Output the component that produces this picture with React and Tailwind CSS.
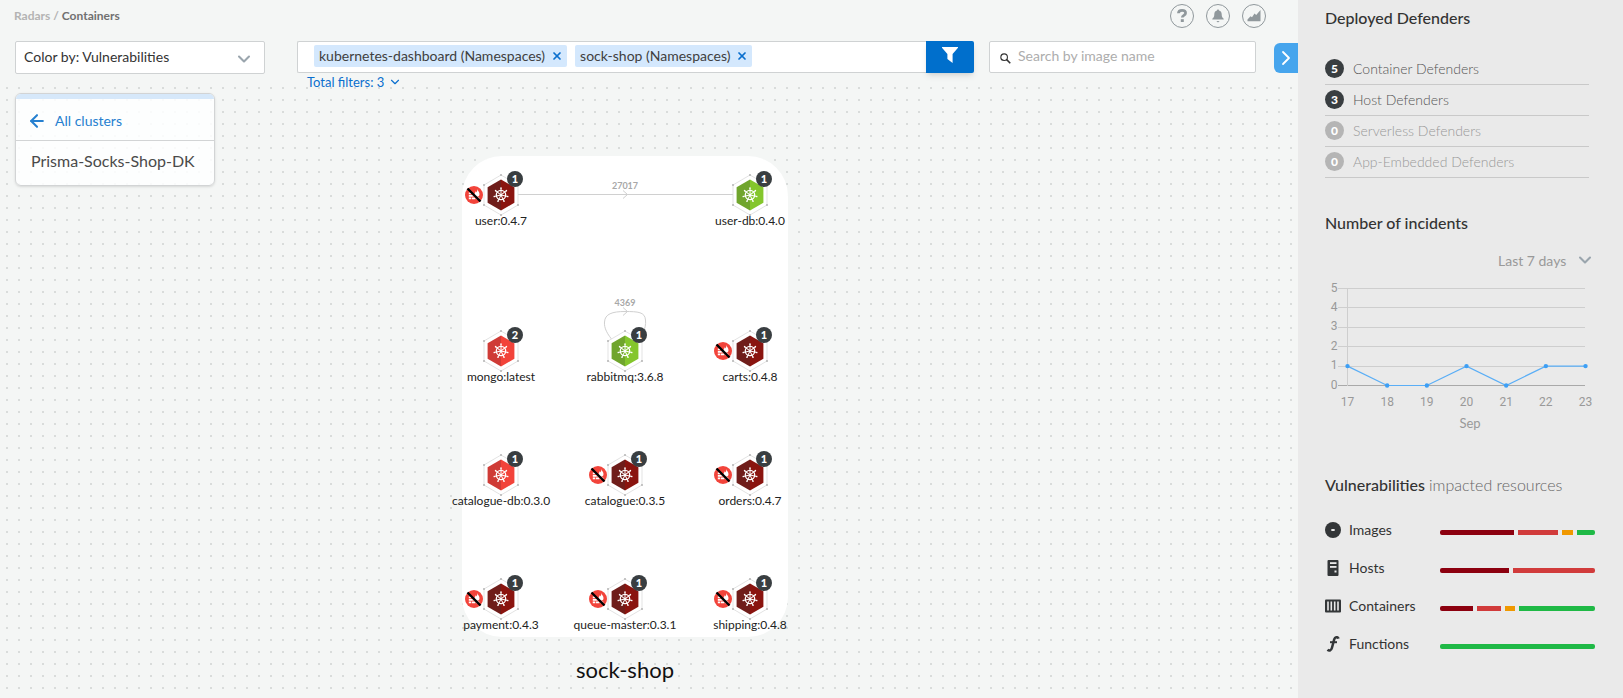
import React, { useState } from 'react';
import { ArrowLeft, ChevronDown, ChevronRight, X } from 'lucide-react';

const nodes = [
  { name: 'user:0.4.7', x: 39, y: 39, color: 'critical', count: 1, blocked: true },
  { name: 'user-db:0.4.0', x: 288, y: 39, color: 'ok', count: 1 },
  { name: 'mongo:latest', x: 39, y: 195, color: 'high', count: 2 },
  { name: 'rabbitmq:3.6.8', x: 163, y: 195, color: 'ok', count: 1 },
  { name: 'carts:0.4.8', x: 288, y: 195, color: 'critical', count: 1, blocked: true },
  { name: 'catalogue-db:0.3.0', x: 39, y: 319, color: 'high', count: 1 },
  { name: 'catalogue:0.3.5', x: 163, y: 319, color: 'critical', count: 1, blocked: true },
  { name: 'orders:0.4.7', x: 288, y: 319, color: 'critical', count: 1, blocked: true },
  { name: 'payment:0.4.3', x: 39, y: 443, color: 'critical', count: 1, blocked: true },
  { name: 'queue-master:0.3.1', x: 163, y: 443, color: 'critical', count: 1, blocked: true },
  { name: 'shipping:0.4.8', x: 288, y: 443, color: 'critical', count: 1, blocked: true },
];

const nodeColors = {
  critical: ['#6f1d1a', '#8a140f'],
  high: ['#cf3b36', '#f2433a'],
  ok: ['#70a52d', '#84c62c'],
};

const defenders = [
  { label: 'Container Defenders', count: 5 },
  { label: 'Host Defenders', count: 3 },
  { label: 'Serverless Defenders', count: 0 },
  { label: 'App-Embedded Defenders', count: 0 },
];

const incidents = [
  { day: 17, value: 1 },
  { day: 18, value: 0 },
  { day: 19, value: 0 },
  { day: 20, value: 1 },
  { day: 21, value: 0 },
  { day: 22, value: 1 },
  { day: 23, value: 1 },
];

const resources = [
  { label: 'Images', icon: ImageIcon, critical: 74, high: 40, medium: 11, ok: 18 },
  { label: 'Hosts', icon: HostIcon, critical: 69, high: 82, medium: 0, ok: 0 },
  { label: 'Containers', icon: ContainerIcon, critical: 33, high: 24, medium: 10, ok: 76 },
  { label: 'Functions', icon: FunctionIcon, critical: 0, high: 0, medium: 0, ok: 155 },
];

const severities = [
  { key: 'critical', className: 'bg-[#8c000f]' },
  { key: 'high', className: 'bg-[#d13b3b]' },
  { key: 'medium', className: 'bg-[#f09800]' },
  { key: 'ok', className: 'bg-[#1fb946]' },
];

function ImageIcon() {
  return (
    <svg viewBox="0 0 16 16" className="w-4 h-4 mt-0.5" aria-hidden="true">
      <circle cx="8" cy="8" r="8" fill="#333638" />
      <rect x="6.3" y="7" width="3.4" height="2" rx="0.6" fill="#eaeaea" />
    </svg>
  );
}

function HostIcon() {
  return (
    <svg viewBox="0 0 16 16" className="w-4 h-4 mt-0.5" aria-hidden="true">
      <rect x="2.5" y="0" width="11" height="16" rx="1" fill="#333638" />
      <rect x="5" y="2.2" width="6.5" height="1.8" fill="#eaeaea" />
      <rect x="5" y="6" width="6.5" height="1.8" fill="#eaeaea" />
      <rect x="9.5" y="10.5" width="2" height="2" fill="#eaeaea" />
    </svg>
  );
}

function ContainerIcon() {
  return (
    <svg viewBox="0 0 16 16" className="w-4 h-4 mt-0.5" aria-hidden="true">
      <rect x="0" y="1.5" width="16" height="13" rx="1" fill="#333638" />
      <path d="M3 3.500v9M6.300 3.500v9M9.700 3.500v9M13 3.500v9" stroke="#eaeaea" strokeWidth="1.600" />
    </svg>
  );
}

function FunctionIcon() {
  return (
    <svg viewBox="0 0 16 16" className="w-4 h-4 mt-0.5" aria-hidden="true">
      <path d="M13.6 2.600C12.800.6 10 .6 9.200 3.400L6.900 12c-.7 2.800-3 3.200-4.300 1.600" fill="none" stroke="#333638" strokeWidth="2.500" />
      <path d="M5 6.200h7" stroke="#333638" strokeWidth="2" />
    </svg>
  );
}

function HelpIcon() {
  return (
    <svg viewBox="0 0 16 16" className="w-4 h-4" aria-hidden="true">
      <path d="M4.4 5.3C4.5 3.2 6 2.3 8 2.3c2.1 0 3.6 1 3.6 2.7 0 2.5-3.3 2.2-3.3 4.5" fill="none" stroke="#90989c" strokeWidth="2.7" />
      <rect x="6.8" y="11.2" width="3" height="2.8" fill="#90989c" />
    </svg>
  );
}

function BellIcon() {
  return (
    <svg viewBox="0 0 16 16" className="w-4 h-4" fill="#90989c" aria-hidden="true">
      <path d="M8 1.5c.7 0 1 .4 1 .9 1.8.5 2.7 1.9 2.7 3.8 0 2.5.7 3.6 2 4.5v.8H2.300v-.8c1.300-.9 2-2 2-4.500 0-1.900.9-3.300 2.700-3.800 0-.5.3-.9 1-.9z" />
      <path d="M6.400 13h3.200L8 14.600z" />
    </svg>
  );
}

function TrendIcon() {
  return (
    <svg viewBox="0 0 16 16" className="w-4 h-4" fill="#90989c" aria-hidden="true">
      <path d="M1.500 13.300V11.500L4.500 8.200 6 9.200 8.500 5.600 10.200 7 14.500 2v11.300z" />
    </svg>
  );
}

// Small firewall with a strike through it, shown left of a node
function FirewallOff() {
  return (
    <svg viewBox="-9 -9 18 18" className="absolute -left-9 -top-[9px] w-[18px] h-[18px]" aria-hidden="true">
      <circle r="9" fill="#f2443b" />
      <path d="M-5.200-2.600h2.600v1.800h-2.600zM-5.200-.1h4v1.800h-4zM-.5-.1h2v1.800h-2zM-5.200 2.400h2.300v1.900h-2.300zM-2.200 2.400h3.600v1.900h-3.600zM2.100 2.400h3.200v1.900H2.100z" fill="#fff" />
      <path d="M3.200-6c.2 1.700 2.300 2.700 2.300 5C5.500.7 4.600 1.800 3 1.800S.4.800.5-.8C.6-2 1.500-2.600 1.700-3.800c.5.3.8.8.9 1.300.6-1 .8-2.300.6-3.500z" fill="#fff" />
      <path d="M-6.500-6.500L6.500 6.500" stroke="#000" strokeWidth="2.400" />
    </svg>
  );
}

const spokes = [0, 1, 2, 3, 4, 5, 6].map((i) => (i * 360) / 7);

function Hexagon({ color }) {
  const [left, right] = nodeColors[color];
  return (
    <svg viewBox="-20 -22 40 44" className="absolute -left-5 -top-[22px] w-10 h-11" aria-hidden="true">
      <path d="M0-20L17-10V10L0 20-17 10V-10z" fill="#fff" stroke="#dcdcdc" strokeWidth="0.8" />
      {[[0, -20], [17, -10], [17, 10], [0, 20], [-17, 10], [-17, -10]].map(([x, y]) => (
        <circle key={`${x},${y}`} cx={x} cy={y} r="1" fill="#b4b4b4" />
      ))}
      <path d="M0-15.500V15.500L-13.400 7.700V-7.700z" fill={left} />
      <path d="M0-15.500V15.500L13.400 7.700V-7.700z" fill={right} />
      <g stroke="#fff" fill="none">
        <circle r="4.700" strokeWidth="1.300" />
        {spokes.map((a) => (
          <g key={a} transform={`rotate(${a})`}>
            <path d="M0-1V-7" strokeWidth="1" />
            <circle cy="-6.900" r="0.800" fill="#fff" stroke="none" />
          </g>
        ))}
      </g>
      <circle r="1.200" fill="#fff" />
    </svg>
  );
}

function Node({ node }) {
  return (
    <div className="absolute w-0 h-0" style={{ left: node.x, top: node.y }}>
      {node.blocked && <FirewallOff />}
      <Hexagon color={node.color} />
      <span className="absolute left-1.5 -top-6 w-4 h-4 rounded-full bg-[#393e41] text-white text-[11px] leading-4 font-black text-center">
        {node.count}
      </span>
      <span className="absolute left-0 top-[18px] -translate-x-1/2 whitespace-nowrap text-[12px] leading-4 text-[#222]">
        {node.name}
      </span>
    </div>
  );
}

function Chip({ label, onRemove }) {
  return (
    <span className="flex items-center h-[22px] gap-1.5 pl-[5px] pr-1 pb-px rounded-xs bg-[#d4e8fd] text-[14px] text-[#404040] whitespace-nowrap">
      {label}
      <button type="button" aria-label={`Remove ${label}`} onClick={onRemove} className="text-[#0a6fce]">
        <X className="w-3 h-3" strokeWidth={3.5} />
      </button>
    </span>
  );
}

function IncidentChart() {
  const px = (i) => 22.5 + i * 39.67;
  const py = (v) => 109.5 - v * 19.4;
  return (
    <svg viewBox="0 0 270 160" className="block w-[270px] h-[160px]" role="img" aria-label="Incidents per day">
      {[0, 1, 2, 3, 4, 5].map((v) => (
        <g key={v}>
          <path d={`M13 ${Math.floor(py(v)) + 0.5}H260`} stroke={v === 0 ? '#a9a9a9' : '#cecece'} />
          <text x="12.500" y={py(v) + 3} textAnchor="end" fontSize="12" fontFamily="Roboto, sans-serif" fill="#999">{v}</text>
        </g>
      ))}
      <path d="M22.500 12V110" stroke="#cecece" />
      <polyline
        points={incidents.map((d, i) => `${px(i)},${py(d.value)}`).join(' ')}
        fill="none"
        stroke="#5aaef6"
        strokeWidth="1.200"
      />
      {incidents.map((d, i) => (
        <g key={d.day}>
          <circle cx={px(i)} cy={py(d.value)} r="2.200" fill="#3d9ff5" />
          <text x={px(i)} y="130" textAnchor="middle" fontSize="12" fontFamily="Roboto, sans-serif" fill="#999">{d.day}</text>
        </g>
      ))}
      <text x="145" y="152" textAnchor="middle" fontSize="13" fill="#999">Sep</text>
    </svg>
  );
}

function Sidebar() {
  return (
    <aside className="w-[325px] shrink-0 bg-[#eaeaea] pl-[27px] pr-7 pt-2 text-[#333]">
      <section className="pr-1.5">
        <h2 className="text-[16px] leading-5 font-medium">Deployed Defenders</h2>
        <ul className="mt-[26px]">
          {defenders.map((d) => (
            <li
              key={d.label}
              className={`flex items-center gap-[9px] h-[31px] pb-0.5 border-b border-[#c9c9c9] text-[14px] font-light ${d.count ? 'text-[#555]' : 'text-[#999]'}`}
            >
              <span
                className={`w-[19px] h-[19px] rounded-full text-white text-[12px] leading-[19px] font-black text-center ${d.count ? 'bg-[#393e41]' : 'bg-[#b5b5b5]'}`}
              >
                {d.count}
              </span>
              {d.label}
            </li>
          ))}
        </ul>
      </section>

      <section className="mt-[35px] pr-1.5">
        <h2 className="text-[16px] leading-5 font-medium">Number of incidents</h2>
        <div className="mt-[15px] relative ml-auto w-[91px] h-6">
          <select aria-label="Time range" className="appearance-none w-full h-6 bg-transparent text-[14px] text-[#999] outline-none">
            <option>Last 7 days</option>
            <option>Last 30 days</option>
          </select>
          <ChevronDown className="absolute -right-1.5 top-0.5 w-5 h-5 text-[#9aa5ad] pointer-events-none" strokeWidth={2.5} />
        </div>
        <div className="mt-1">
          <IncidentChart />
        </div>
      </section>

      <section className="mt-[39px]">
        <h2 className="text-[16px] leading-5 font-medium">
          Vulnerabilities <span className="font-light text-[#666]">impacted resources</span>
        </h2>
        <ul className="mt-[15px]">
          {resources.map((r) => (
            <li key={r.label} className="flex items-center gap-2 h-[38px] text-[14px]">
              <r.icon />
              <span className="w-[83px]">{r.label}</span>
              <div className="flex flex-1 gap-1 h-[5px] mt-1.5 rounded-xs overflow-hidden">
                {severities
                  .filter((s) => r[s.key] > 0)
                  .map((s) => (
                    <div key={s.key} className={s.className} style={{ flex: `${r[s.key]} 1 0` }} />
                  ))}
              </div>
            </li>
          ))}
        </ul>
      </section>
    </aside>
  );
}

export default function App() {
  const [filters, setFilters] = useState([
    'kubernetes-dashboard (Namespaces)',
    'sock-shop (Namespaces)',
  ]);

  return (
    <div className="min-h-screen flex bg-[#f4f6f5] font-[Lato,sans-serif]">
      <main className="flex-1 min-w-0 flex flex-col">
        <header className="flex items-center justify-between h-8 pl-3.5 pr-8">
          <nav aria-label="Breadcrumb" className="text-[12px] font-bold text-[#b3b3b3]">
            <a href="#radars">Radars</a> / <span className="text-[#707070]">Containers</span>
          </nav>
          <div className="flex gap-3">
            <button type="button" aria-label="Help" className="w-6 h-6 rounded-full border border-[#90989c] flex items-center justify-center">
              <HelpIcon />
            </button>
            <button type="button" aria-label="Notifications" className="w-6 h-6 rounded-full border border-[#90989c] flex items-center justify-center">
              <BellIcon />
            </button>
            <button type="button" aria-label="Statistics" className="w-6 h-6 rounded-full border border-[#90989c] flex items-center justify-center">
              <TrendIcon />
            </button>
          </div>
        </header>

        {/* Toolbar */}
        <div className="flex mt-[9px] pl-[15px] h-[41px] items-start">
          <div className="relative shrink-0 w-[250px] mr-8">
            <select aria-label="Color by" className="appearance-none w-full h-[33px] px-2 pb-0.5 bg-white border border-[#cfd2d3] rounded-xs text-[14px] text-[#333] outline-none">
              <option>Color by: Vulnerabilities</option>
              <option>Color by: Compliance</option>
            </select>
            <ChevronDown className="absolute right-[11px] top-2 w-5 h-5 text-[#9aa5ad] pointer-events-none" strokeWidth={2.5} />
          </div>

          <div className="relative flex flex-1 min-w-0 h-8">
            <div className="flex flex-1 min-w-0 items-center gap-2 pl-4 pr-2 pb-0.5 bg-white border border-r-0 border-[#cfd2d3] rounded-l-xs">
              {filters.map((f) => (
                <Chip key={f} label={f} onRemove={() => setFilters(filters.filter((v) => v !== f))} />
              ))}
              <input type="text" aria-label="Add filter" className="flex-1 min-w-0 h-6 text-[14px] outline-none" />
            </div>
            <button type="button" aria-label="Filter" className="w-12 shrink-0 flex items-center justify-center pb-1 bg-[#006fcc] rounded-r-xs shadow-md">
              <svg viewBox="0 0 16 16" className="w-4 h-4" fill="#fff" aria-hidden="true">
                <path d="M0 0h16v.8L10.600 7v9L5.400 12V7L0 .8z" />
              </svg>
            </button>
            <button type="button" className="absolute left-2.5 top-[31px] flex items-center gap-1 text-[13px] leading-5 text-[#0a6fce]">
              Total filters: 3
              <ChevronDown className="w-3.5 h-3.5" strokeWidth={2} />
            </button>
          </div>

          <label className="flex shrink-0 items-center w-[267px] h-8 ml-[15px] mr-[18px] pl-2.5 gap-[7px] bg-white border border-[#cfd2d3] rounded-xs">
            <svg viewBox="0 0 12 12" className="w-[11px] h-[11px] mt-0.5" fill="none" stroke="#333" aria-hidden="true">
              <circle cx="4.500" cy="4.500" r="3.600" strokeWidth="1.200" />
              <path d="M7 7l4.200 4.200" strokeWidth="1.700" />
            </svg>
            <input
              type="search"
              aria-label="Search by image name"
              placeholder="Search by image name"
              className="flex-1 min-w-0 pb-1 text-[14px] placeholder-[#adadad] outline-none"
            />
          </label>

          <button type="button" aria-label="Collapse panel" className="shrink-0 mt-0.5 w-6 h-[30px] rounded-l-md bg-[#46a5ed] flex items-center justify-center text-white">
            <ChevronRight className="w-6 h-6 shrink-0" strokeWidth={1.8} />
          </button>
        </div>

        {/* Radar canvas */}
        <div className="relative flex-1 min-h-[600px] pt-[11px] pl-[15px] overflow-hidden bg-[radial-gradient(circle_at_7px_6px,#d9dcdb_1px,transparent_1.5px)] bg-[size:12px_12px]">
          <div className="w-[200px] rounded-md border border-[#d2d4d5] bg-white/85 shadow-sm overflow-hidden">
            <div className="h-[5px] bg-[#d6e8fa]" />
            <a href="#clusters" className="flex items-center gap-2 h-[42px] pl-[11px] pt-0.5 border-b border-[#d2d4d5] text-[14px] text-[#2680d0]">
              <ArrowLeft className="w-5 h-5" strokeWidth={2.5} />
              All clusters
            </a>
            <p className="flex items-center h-11 pl-[15px] pb-1 text-[16px] text-[#4a4a4a]">Prisma-Socks-Shop-DK</p>
          </div>

          <div className="absolute left-[462px] top-[74px] w-[326px] h-[481px] rounded-[40px] bg-white">
            <svg viewBox="0 0 326 481" className="absolute inset-0 w-full h-full" fill="none" stroke="#d0d0d0" aria-hidden="true">
              <path d="M56 38.500H271M161 34.500L165.500 38.500 161 42.500" />
              <path d="M152 186C145 178 142 172 142.500 166C143 158 150 155.500 163 155.500S183 156 183.500 164C184 169 183 172 181 177M161 151.500L165.500 155.500 161 159.500" />
            </svg>
            <span className="absolute left-[163px] top-6 -translate-x-1/2 text-[9px] leading-3 font-bold text-[#a8a8a8]">27017</span>
            <span className="absolute left-[163px] top-[141px] -translate-x-1/2 text-[9px] leading-3 font-bold text-[#a8a8a8]">4369</span>
            {nodes.map((n) => (
              <Node key={n.name} node={n} />
            ))}
            <h1 className="absolute left-0 right-0 top-[500px] text-center text-[22px] leading-7 text-[#111]">sock-shop</h1>
          </div>
        </div>
      </main>

      <Sidebar />
    </div>
  );
}
